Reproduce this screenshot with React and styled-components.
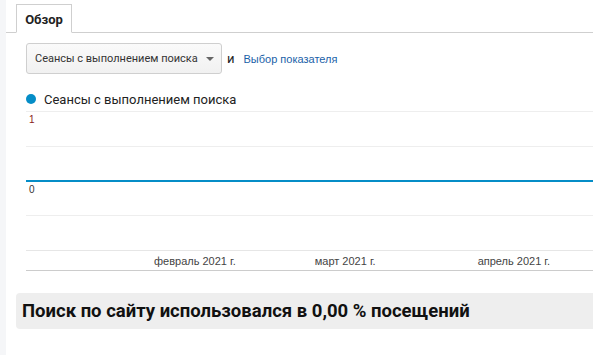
import React from 'react';
import styled, { createGlobalStyle } from 'styled-components';

const GlobalStyle = createGlobalStyle`
  html, body {
    margin: 0;
    padding: 0;
    background: #fff;
    font-family: Roboto, "Liberation Sans", Arial, sans-serif;
  }
`;

const Page = styled.div`
  display: flex;
  width: 593px;
  height: 355px;
  overflow: hidden;
`;

const Rail = styled.div`
  width: 6px;
  flex: none;
  background: #f5f6f8;
`;

const Main = styled.div`
  flex: 1;
  min-width: 0;
`;

const TabBar = styled.div`
  display: flex;
  height: 32px;
  padding-left: 10px;
  border-bottom: 1px solid #cfcfcf;
`;

const Tab = styled.div`
  margin-top: 4px;
  margin-bottom: -1px;
  width: 56px;
  box-sizing: border-box;
  border: 1px solid #cfcfcf;
  border-bottom: 1px solid #fff;
  background: #fff;
  display: flex;
  align-items: center;
  justify-content: center;
  font-weight: 700;
  font-size: 13px;
  color: #222;
  padding-top: 1px;
`;

const Controls = styled.div`
  display: flex;
  align-items: center;
  margin: 10px 0 0 20px;
  height: 31px;
`;

const Select = styled.div`
  display: flex;
  align-items: center;
  justify-content: space-between;
  box-sizing: border-box;
  width: 196px;
  height: 31px;
  padding: 0 7px 0 8px;
  border: 1px solid #cfcfcf;
  border-radius: 3px;
  background: linear-gradient(#fafafa, #f1f1f1);
  font-size: 11px;
  white-space: nowrap;
  color: #333;
`;

const Caret = styled.span`
  width: 0;
  height: 0;
  border-left: 4px solid transparent;
  border-right: 4px solid transparent;
  border-top: 4px solid #666;
`;

const And = styled.span`
  margin-left: 5px;
  font-size: 13px;
  color: #222;
`;

const Link = styled.a`
  margin-left: 9px;
  font-family: "Liberation Sans", Arial, sans-serif;
  font-size: 11px;
  color: #1a5fa8;
  text-decoration: none;
`;

const Legend = styled.div`
  display: flex;
  align-items: center;
  margin: 16px 0 0 20px;
  height: 18px;
  font-size: 13px;
  color: #222;
`;

const Dot = styled.span`
  width: 10px;
  height: 10px;
  border-radius: 50%;
  background: #058dc7;
  margin: 0 8px 0 0;
`;

const Chart = styled.div`
  margin: 3px 0 0 20px;
`;

const GridRow = styled.div`
  box-sizing: border-box;
  height: 35px;
  border-top: ${({ $line }) => ($line ? '2px solid #058dc7' : '1px solid #eeeeee')};
  margin-top: ${({ $line }) => ($line ? '-1px' : '0')};
  padding-left: 3px;
  font-family: "Liberation Sans", Arial, sans-serif;
  font-size: 10px;
  line-height: 16px;
  color: ${({ $zero }) => ($zero ? '#333' : '#8a2020')};
`;

const Axis = styled.div`
  display: flex;
  height: 19px;
  border-top: 1px solid #e6e6e6;
  border-bottom: 1px solid #cccccc;
  font-family: "Liberation Sans", Arial, sans-serif;
  font-size: 11px;
  color: #444;
  align-items: center;
`;

const Tick = styled.span`
  white-space: nowrap;
`;

const Summary = styled.div`
  margin: 22px 0 0 10px;
  height: 36px;
  display: flex;
  align-items: center;
  padding-left: 6px;
  background: #eeeeee;
  border-radius: 4px 0 0 4px;
  font-weight: 700;
  font-size: 18.5px;
  color: #111;
`;

const ticks = [
  { label: 'февраль 2021 г.', gap: 128 },
  { label: 'март 2021 г.', gap: 79 },
  { label: 'апрель 2021 г.', gap: 102 },
];

const App = () => (
  <>
    <GlobalStyle />
    <Page>
      <Rail />
      <Main>
        <TabBar>
          <Tab>Обзор</Tab>
        </TabBar>
        <Controls>
          <Select>
            Сеансы с выполнением поиска
            <Caret />
          </Select>
          <And>и</And>
          <Link href="#">Выбор показателя</Link>
        </Controls>
        <Legend>
          <Dot />
          Сеансы с выполнением поиска
        </Legend>
        <Chart>
          <GridRow>1</GridRow>
          <GridRow />
          <GridRow $line $zero>0</GridRow>
          <GridRow />
          <Axis>
            {ticks.map((t) => (
              <Tick key={t.label} style={{ marginLeft: t.gap }}>
                {t.label}
              </Tick>
            ))}
          </Axis>
        </Chart>
        <Summary>Поиск по сайту использовался в 0,00 % посещений</Summary>
      </Main>
    </Page>
  </>
);

export default App;
